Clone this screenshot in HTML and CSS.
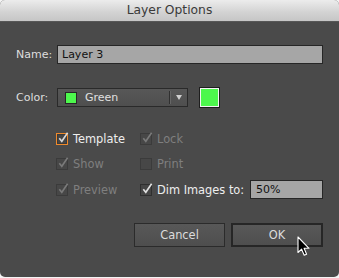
FILE: index.html
```html
<!DOCTYPE html>
<html>
<head>
<meta charset="utf-8">
<link rel="stylesheet" href="styles.css">
</head>
<body>
<div class="window">
  <div class="titlebar">Layer Options</div>
  <div class="content">
    <div class="row name-row">
      <span class="label">Name:</span>
      <div class="textfield">Layer 3</div>
    </div>
    <div class="row color-row">
      <span class="label">Color:</span>
      <div class="select">
        <span class="mini-swatch"></span>
        <span class="select-text">Green</span>
        <span class="divider"></span>
        <span class="arrow"></span>
      </div>
      <div class="big-swatch"></div>
    </div>
    <div class="checks">
      <div class="check focus">
        <span class="box"><svg viewBox="0 0 12 12" width="12" height="12"><path d="M2.3 6.2 L4.8 9.3 L10.6 0.8" fill="none" stroke="#d8d8d8" stroke-width="1.6"/></svg></span>
        <span class="ctext on">Template</span>
      </div>
      <div class="check disabled">
        <span class="box"><svg viewBox="0 0 12 12" width="12" height="12"><path d="M2.3 6.2 L4.8 9.3 L10.6 0.8" fill="none" stroke="#7a7a7a" stroke-width="1.6"/></svg></span>
        <span class="ctext">Lock</span>
      </div>
      <div class="check disabled">
        <span class="box"><svg viewBox="0 0 12 12" width="12" height="12"><path d="M2.3 6.2 L4.8 9.3 L10.6 0.8" fill="none" stroke="#7a7a7a" stroke-width="1.6"/></svg></span>
        <span class="ctext">Show</span>
      </div>
      <div class="check disabled">
        <span class="box"></span>
        <span class="ctext">Print</span>
      </div>
      <div class="check disabled">
        <span class="box"><svg viewBox="0 0 12 12" width="12" height="12"><path d="M2.3 6.2 L4.8 9.3 L10.6 0.8" fill="none" stroke="#7a7a7a" stroke-width="1.6"/></svg></span>
        <span class="ctext">Preview</span>
      </div>
      <div class="check dim">
        <span class="box"><svg viewBox="0 0 12 12" width="12" height="12"><path d="M2.3 6.2 L4.8 9.3 L10.6 0.8" fill="none" stroke="#e0e0e0" stroke-width="1.6"/></svg></span>
        <span class="ctext on">Dim Images to:</span>
        <div class="textfield small">50%</div>
      </div>
    </div>
    <div class="buttons">
      <div class="button">Cancel</div>
      <div class="button default">OK</div>
    </div>
  </div>
  <svg class="cursor" width="14" height="22" viewBox="0 0 14 22">
    <path d="M1 1 L1 16.5 L4.6 13.2 L7.2 19.3 L9.6 18.3 L7.1 12.3 L12 12.3 Z" fill="#000" stroke="#fff" stroke-width="1.1" stroke-linejoin="round"/>
  </svg>
</div>
</body>
</html>
```

FILE: styles.css
```css
* { box-sizing: border-box; }
html, body { margin: 0; padding: 0; background: #f4f4f4; }
body {
  width: 339px;
  height: 278px;
  overflow: hidden;
  font-family: "DejaVu Sans", "Liberation Sans", sans-serif;
  font-size: 11px;
}
.window {
  position: relative;
  width: 339px;
  height: 277px;
  background: #4a4a4a;
  border-radius: 5px 5px 5px 5px;
  overflow: hidden;
}
.titlebar {
  height: 22px;
  background: linear-gradient(#ececec, #d2d2d2 60%, #c6c6c6);
  border-bottom: 1px solid #575757;
  color: #3a3a3a;
  font-size: 12.3px;
  text-align: center;
  line-height: 21px;
}
.content {
  padding: 23px 16px 0 16px;
}
.row {
  display: flex;
  align-items: center;
}
.label {
  width: 41px;
  color: #dedede;
}
.textfield {
  height: 19px;
  background: #a6a6a6;
  border: 1px solid #262626;
  color: #111;
  padding-left: 4px;
  line-height: 17px;
}
.name-row .textfield { flex: 1; }
.color-row { margin-top: 23px; height: 21px; }
.select {
  width: 131px;
  height: 19px;
  border: 1px solid #2a2a2a;
  background: linear-gradient(#575757, #4f4f4f);
  display: flex;
  align-items: center;
  padding-left: 7px;
}
.mini-swatch {
  width: 12px;
  height: 12px;
  background: #4df84d;
  border: 1px solid #262626;
}
.select-text {
  color: #e0e0e0;
  margin-left: 8px;
  flex: 1;
}
.divider {
  width: 2px;
  height: 13px;
  border-left: 1px solid #303030;
  border-right: 1px solid #666;
}
.arrow {
  width: 0;
  height: 0;
  margin: 0 5px 0 5px;
  border-left: 3.5px solid transparent;
  border-right: 3.5px solid transparent;
  border-top: 5px solid #d0d0d0;
}
.big-swatch {
  margin-left: 11px;
  width: 21px;
  height: 21px;
  border: 1px solid #1e1e1e;
  box-shadow: inset 0 0 0 1px #f4f4f4;
  background: #4df84d;
}
.checks {
  margin-top: 21px;
  padding-left: 40px;
  display: grid;
  grid-template-columns: 84px 1fr;
  grid-auto-rows: 19px;
  row-gap: 6.5px;
}
.check {
  display: flex;
  align-items: center;
}
.box {
  width: 12px;
  height: 12px;
  border: 1px solid #2f2f2f;
  background: #454545;
  display: flex;
  position: relative;
}
.box svg { position: absolute; left: 0; top: -2px; }
.check.disabled .box { border-color: #3b3b3b; background: #474747; }
.check.focus .box { border-color: #ef8a2c; box-shadow: inset 0 0 0 1px #3a3a3a; }
.ctext {
  margin-left: 5px;
  color: #7f7f7f;
  font-size: 11.4px;
}
.ctext.on { color: #eeeeee; }
.check.dim .textfield {
  margin-left: auto;
  width: 73px;
  padding-left: 5px;
}
.buttons {
  margin-top: 24px;
  display: flex;
  justify-content: flex-end;
  gap: 6px;
  padding-right: 0;
}
.button {
  width: 91px;
  height: 24px;
  border: 1px solid #2b2b2b;
  background: linear-gradient(#585858, #4e4e4e);
  color: #dcdcdc;
  text-align: center;
  line-height: 22px;
  font-size: 11.4px;
}
.button.default {
  width: 92px;
  border: 2px solid #262626;
  line-height: 20px;
}
.cursor {
  position: absolute;
  left: 297px;
  top: 236px;
}
```
